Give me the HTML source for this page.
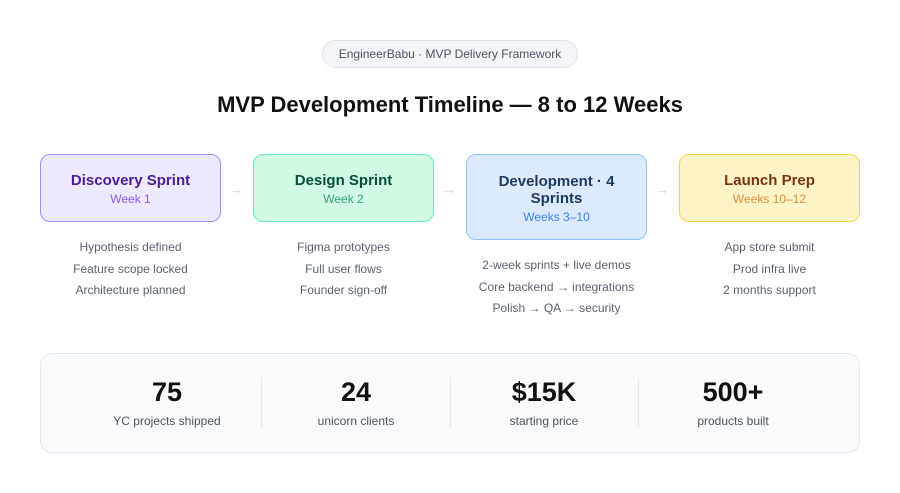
<!DOCTYPE html><html><head><style>
body{margin:0;width:900px;height:493px;background:#fff;font-family:"Liberation Sans",sans-serif;position:relative;overflow:hidden}
.pill{position:absolute;left:322px;top:40px;width:254px;height:26px;border:1px solid #dfe3ea;background:#f3f5f8;border-radius:14px;text-align:center;line-height:26px;font-size:12px;color:#4b5563}
h1{position:absolute;top:92px;left:0;width:900px;margin:0;text-align:center;font-size:22px;font-weight:bold;color:#111}
.box{position:absolute;top:154px;width:179px;height:66px;border-radius:10px;border:1px solid;text-align:center;display:flex;flex-direction:column;justify-content:center;padding-top:2px;box-sizing:content-box}
.box b{font-size:15px;line-height:17px}
.box span{font-size:12px;margin-top:3px}
.det{position:absolute;width:181px;text-align:center;font-size:12px;line-height:21.7px;color:#5b6370}
.arr{position:absolute;top:181px;color:#cbd5e1;font-size:14px}
.stats{position:absolute;left:40px;top:353px;width:818px;height:98px;border:1px solid #e2e8f0;background:#f8fafc;border-radius:12px}
.st{position:absolute;top:22px;text-align:center;width:188px}
.st b{display:block;font-size:27px;color:#111;line-height:32px}
.st span{display:block;font-size:12px;color:#4b5563;margin-top:6px}
.dv{position:absolute;top:24px;width:1px;height:50px;background:#e2e8f0}
</style></head><body>
<div class="pill">EngineerBabu · MVP Delivery Framework</div>
<h1>MVP Development Timeline — 8 to 12 Weeks</h1>
<div class="box" style="left:40px;height:64px;background:#ede9fe;border-color:#a78bfa"><b style="color:#4c1d95">Discovery Sprint</b><span style="color:#8b5cf6">Week 1</span></div>
<div class="arr" style="left:229px">→</div>
<div class="box" style="left:253px;height:64px;background:#d1fae5;border-color:#6ee7b7"><b style="color:#064e3b">Design Sprint</b><span style="color:#34a37a">Week 2</span></div>
<div class="arr" style="left:442px">→</div>
<div class="box" style="left:466px;height:82px;background:#dbeafe;border-color:#93c5fd"><b style="color:#1e3a5f">Development · 4<br>Sprints</b><span style="color:#3b82f6">Weeks 3–10</span></div>
<div class="arr" style="left:655px">→</div>
<div class="box" style="left:679px;height:64px;background:#fef3c7;border-color:#fcd34d"><b style="color:#78350f">Launch Prep</b><span style="color:#e0903a">Weeks 10–12</span></div>
<div class="det" style="left:40px;top:237px">Hypothesis defined<br>Feature scope locked<br>Architecture planned</div>
<div class="det" style="left:253px;top:237px">Figma prototypes<br>Full user flows<br>Founder sign-off</div>
<div class="det" style="left:466px;top:255px">2-week sprints + live demos<br>Core backend → integrations<br>Polish → QA → security</div>
<div class="det" style="left:679px;top:237px">App store submit<br>Prod infra live<br>2 months support</div>
<div class="stats">
<div class="st" style="left:32px"><b>75</b><span>YC projects shipped</span></div>
<div class="dv" style="left:220px"></div>
<div class="st" style="left:221px"><b>24</b><span>unicorn clients</span></div>
<div class="dv" style="left:409px"></div>
<div class="st" style="left:409px"><b>$15K</b><span>starting price</span></div>
<div class="dv" style="left:597px"></div>
<div class="st" style="left:598px"><b>500+</b><span>products built</span></div>
</div>
</body></html>
